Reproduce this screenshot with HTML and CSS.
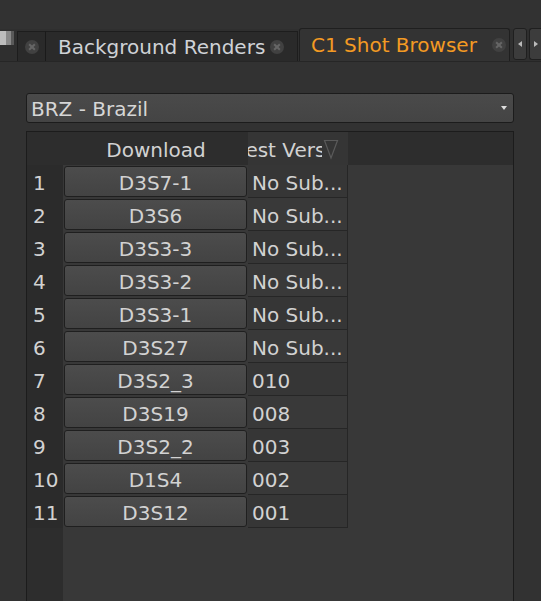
FILE: index.html
```html
<!DOCTYPE html>
<html>
<head>
<meta charset="utf-8">
<link rel="stylesheet" href="styles.css">
</head>
<body>
<div class="topspace"></div>
<div class="tabbar">
  <div class="icon"></div>
  <div class="tab tab-stub"><span class="close"></span></div>
  <div class="tab tab-bg"><span class="label">Background Renders</span><span class="close"></span></div>
  <div class="tab tab-active"><span class="label">C1 Shot Browser</span><span class="close"></span></div>
  <div class="arrows">
    <div class="arrow"><svg width="4" height="6" viewBox="0 0 4 6"><path d="M4 0 L0 3 L4 6 Z" fill="#bbb"/></svg></div>
    <div class="arrow arrow-last"><svg width="4" height="6" viewBox="0 0 4 6"><path d="M0 0 L4 3 L0 6 Z" fill="#bbb"/></svg></div>
  </div>
</div>
<div class="panel">
  <div class="dropdown">
    <span>BRZ - Brazil</span>
    <svg class="dd-arrow" width="6" height="4" viewBox="0 0 6 4"><path d="M0 0 L6 0 L3 4 Z" fill="#ddd"/></svg>
  </div>
  <div class="table">
    <div class="thead">
      <div class="corner"></div>
      <div class="th th-dl">Download</div>
      <div class="th th-ver">
        <div class="th-ver-label"><span>Latest Version</span></div>
        <svg class="sort" width="16" height="22" viewBox="0 0 16 22"><path d="M1.5 2.5 L14.5 2.5 L8 20 Z" fill="none" stroke="#5a5a5a" stroke-width="1.2"/></svg>
      </div>
    </div>
    <div class="row"><div class="num">1</div><div class="cell-btn"><div class="btn">D3S7-1</div></div><div class="ver">No Sub...</div></div>
    <div class="row"><div class="num">2</div><div class="cell-btn"><div class="btn">D3S6</div></div><div class="ver">No Sub...</div></div>
    <div class="row"><div class="num">3</div><div class="cell-btn"><div class="btn">D3S3-3</div></div><div class="ver">No Sub...</div></div>
    <div class="row"><div class="num">4</div><div class="cell-btn"><div class="btn">D3S3-2</div></div><div class="ver">No Sub...</div></div>
    <div class="row"><div class="num">5</div><div class="cell-btn"><div class="btn">D3S3-1</div></div><div class="ver">No Sub...</div></div>
    <div class="row"><div class="num">6</div><div class="cell-btn"><div class="btn">D3S27</div></div><div class="ver">No Sub...</div></div>
    <div class="row"><div class="num">7</div><div class="cell-btn"><div class="btn">D3S2_3</div></div><div class="ver">010</div></div>
    <div class="row"><div class="num">8</div><div class="cell-btn"><div class="btn">D3S19</div></div><div class="ver">008</div></div>
    <div class="row"><div class="num">9</div><div class="cell-btn"><div class="btn">D3S2_2</div></div><div class="ver">003</div></div>
    <div class="row"><div class="num">10</div><div class="cell-btn"><div class="btn">D1S4</div></div><div class="ver">002</div></div>
    <div class="row"><div class="num">11</div><div class="cell-btn"><div class="btn">D3S12</div></div><div class="ver">001</div></div>
  </div>
</div>
</body>
</html>
```

FILE: styles.css
```css
* { box-sizing: border-box; }
html, body { margin: 0; padding: 0; }
body {
  background: #323232;
  font-family: "DejaVu Sans", Verdana, sans-serif;
  font-size: 20px;
  color: #d2d2d2;
  width: 541px;
  height: 601px;
  overflow: hidden;
}
.topspace { height: 29px; }
.tabbar {
  display: flex;
  align-items: flex-end;
  height: 33px;
  border-bottom: 1px solid #262626;
  background: #2f2f2f;
}
.tabbar > * { flex: none; }
.icon {
  align-self: flex-start;
  margin-top: 2px;
  width: 14px;
  height: 14px;
  background: linear-gradient(90deg, #bdbdbd 0 6px, #8a8a8a 6px 11px, #5a5a5a 11px);
  margin-right: 3px;
}
.tab {
  display: flex;
  align-items: center;
  height: 30px;
  background: #2a2a2a;
  border: 1px solid #1d1d1d;
  border-bottom: none;
}
.tab-stub { width: 29px; justify-content: center; border-right: 1px solid #1a1a1a; }
.tab-bg { width: 252px; padding-left: 12px; border-left: none; }
.tab-bg .label { width: 212px; color: #cfd2d6; }
.tab-active {
  height: 33px;
  width: 211px;
  padding-left: 11px;
  background: #333333;
  border-radius: 3px 3px 0 0;
  border-color: #1f1f1f;
  color: #f39a23;
  margin-left: 1px;
}
.tab-active .label { width: 181px; }
.close {
  display: inline-block;
  width: 14px;
  height: 14px;
  border-radius: 50%;
  background: #414141;
  position: relative;
  flex: none;
}
.close::before, .close::after {
  content: "";
  position: absolute;
  left: 3px;
  top: 6px;
  width: 8px;
  height: 2px;
  background: #666;
  transform: rotate(45deg);
}
.close::after { transform: rotate(-45deg); }
.arrows {
  display: flex;
  gap: 2px;
  margin-left: 3px;
  height: 33px;
  align-items: stretch;
  padding-bottom: 1px;
}
.arrow {
  width: 14px;
  background: #3c3c3c;
  border: 1px solid #1f1f1f;
  border-radius: 3px;
  display: flex;
  align-items: center;
  justify-content: center;
}
.arrow-last { width: 13px; border-right: none; border-radius: 3px 0 0 3px; }
.panel { padding: 31px 27px 0 26px; }
.dropdown {
  height: 30px;
  background: linear-gradient(#4a4a4a, #444444);
  border: 1px solid #1c1c1c;
  border-radius: 3px;
  display: flex;
  align-items: center;
  justify-content: space-between;
  padding: 2px 6px 0 4px;
  color: #d6d6d6;
}
.dd-arrow { margin-top: -2px; }
.table {
  margin-top: 8px;
  height: 480px;
  border: 1px solid #1c1c1c;
  background: linear-gradient(90deg, #2d2d2d 36px, #383838 36px);
}
.thead {
  display: flex;
  height: 33px;
  background: #2d2d2d;
}
.corner { width: 36px; }
.th { display: flex; align-items: center; }
.th-dl { width: 185px; justify-content: center; padding: 3px 0 0 1px; }
.th-ver {
  width: 100px;
  background: #353535;
}
.th-ver-label {
  width: 74px;
  overflow: hidden;
  display: flex;
  justify-content: center;
  white-space: nowrap;
  padding-top: 3px;
}
.th-ver-label span { flex: none; }
.sort { margin-left: 1px; }
.row { display: flex; height: 33px; }
.num {
  width: 36px;
  background: #2b2b2b;
  padding: 3px 0 0 6px;
  display: flex;
  align-items: center;
}
.cell-btn { width: 185px; padding: 1px; }
.btn {
  height: 100%;
  background: linear-gradient(#4c4c4c, #434343);
  border: 1px solid #1f1f1f;
  border-radius: 3px;
  display: flex;
  align-items: center;
  justify-content: center;
  padding-top: 3px;
}
.ver {
  width: 100px;
  background: #393939;
  border-right: 1px solid #262626;
  border-bottom: 1px solid #262626;
  display: flex;
  align-items: center;
  padding: 3px 0 0 4px;
}
.row:nth-child(even) .ver { background: #363636; }
```
